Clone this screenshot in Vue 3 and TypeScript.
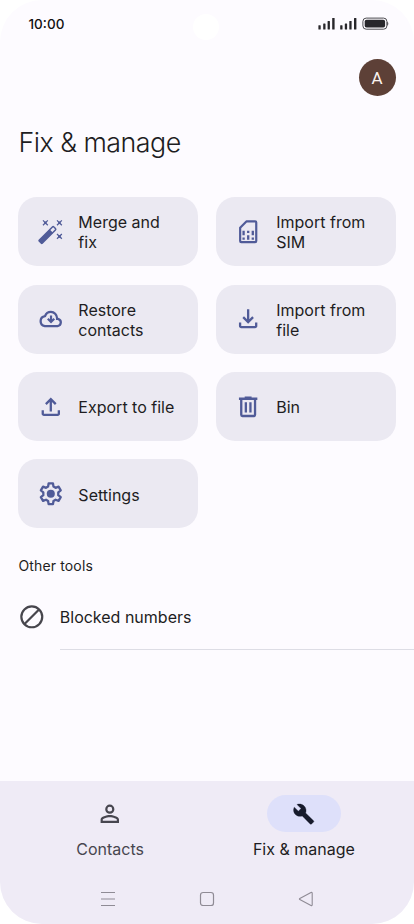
<script setup lang="ts">
interface Tool {
  id: string
  lines: string[]
}

const tools: Tool[] = [
  { id: 'merge', lines: ['Merge and', 'fix'] },
  { id: 'sim', lines: ['Import from', 'SIM'] },
  { id: 'restore', lines: ['Restore', 'contacts'] },
  { id: 'import', lines: ['Import from', 'file'] },
  { id: 'export', lines: ['Export to file'] },
  { id: 'bin', lines: ['Bin'] },
  { id: 'settings', lines: ['Settings'] },
]
</script>

<template>
  <div class="screen">
    <header class="status">
      <span class="time">10:00</span>
      <span class="camera"></span>
      <svg class="indicators" width="72" height="14" viewBox="0 0 72 14">
        <g fill="#28272b">
          <rect x="0.4" y="8.2" width="2.3" height="4.2" rx=".5" />
          <rect x="5.2" y="6.6" width="2.3" height="5.8" rx=".5" />
          <rect x="9.6" y="4" width="2.3" height="8.4" rx=".5" />
          <rect x="14.2" y="1" width="2.4" height="11.4" rx=".5" />
          <rect x="22.2" y="8.2" width="2.3" height="4.2" rx=".5" />
          <rect x="26.8" y="6.6" width="2.3" height="5.8" rx=".5" />
          <rect x="31.3" y="4" width="2.3" height="8.4" rx=".5" />
          <rect x="36" y="1" width="2.4" height="11.4" rx=".5" />
          <rect x="46.7" y="2.7" width="20.4" height="7.9" rx="1.8" />
          <path d="M69.3 4.7c1.3.3 1.3 3.6 0 3.9z" />
        </g>
        <rect x="44.9" y="1.1" width="24" height="11.1" rx="3.3" fill="none" stroke="#4c4b4f" stroke-width="1" />
      </svg>
    </header>

    <main class="content">
      <div class="account"><span class="avatar">A</span></div>
      <h1 class="title">Fix &amp; manage</h1>

      <div class="grid">
        <div v-for="tool in tools" :key="tool.id" class="card">
          <svg class="icon" viewBox="0 0 24 24">
            <g v-if="tool.id === 'merge'">
              <g transform="translate(9.2 14.6) rotate(-45)">
                <rect x="-9.6" y="-2.500" width="14.200" height="5" rx="1.100" fill="currentColor" />
                <rect x="3.500" y="-1.850" width="5.200" height="3.700" rx=".9" fill="none" stroke="currentColor" stroke-width="1.300" />
              </g>
              <path fill="none" stroke="currentColor" stroke-width="1.100" d="M5.200 2.100l4.200 4.200m0-4.200L5.200 6.300M17.400 2.100l4.200 4.200m0-4.200l-4.200 4.200M17.400 13.900l4.200 4.200m0-4.200l-4.200 4.200" />
              <path fill="currentColor" d="M7.300 2.900l1.300 1.300-1.300 1.300-1.300-1.300zM19.500 2.900l1.300 1.300-1.300 1.300-1.300-1.300zM19.500 14.700l1.300 1.300-1.300 1.300-1.300-1.300z" />
            </g>
            <g v-else-if="tool.id === 'sim'" transform="translate(.35 0)">
              <path fill="none" stroke="currentColor" stroke-width="1.900" stroke-linejoin="round" d="M10.400 3H18q1 0 1 1v16q0 1-1 1H6q-1 0-1-1V8.400z" />
              <path fill="currentColor" d="M7 11h2v4H7zM11 11h2v2h-2zM15 11h2v4h-2zM7 17h2v2H7zM11 15h2v4h-2zM15 17h2v2h-2z" />
            </g>
            <g v-else-if="tool.id === 'restore'" transform="translate(.2 0)">
              <path fill="none" stroke="currentColor" stroke-width="2" d="M6.600 18.300H17.700a3.200 3.200 0 0 0 .3-6.300h-.7v-.5c-.2-3-2.500-5.500-5.400-5.500-2.400 0-4.300 1.400-5.100 3.600A4.400 4.400 0 0 0 6.600 18.300z" />
              <path fill="none" stroke="currentColor" stroke-width="1.900" d="M12 9.200v5.400M9.200 12l2.800 2.800 2.800-2.800" />
            </g>
            <path v-else-if="tool.id === 'import'" fill="currentColor" d="M12 16 7 11l1.400-1.450 2.600 2.600V3.500h2v8.650l2.600-2.600L17 11zM6 20q-.82 0-1.410-.59Q4 18.820 4 18v-3h2v3h12v-3h2v3q0 .82-.59 1.410Q18.820 20 18 20z" transform="translate(.3 .2)" />
            <path v-else-if="tool.id === 'export'" fill="currentColor" d="M11 16V7.850l-2.600 2.600L7 9l5-5 5 5-1.400 1.450-2.600-2.600V16zM6 20q-.82 0-1.410-.59Q4 18.820 4 18v-3h2v3h12v-3h2v3q0 .82-.59 1.410Q18.820 20 18 20z" />
            <path v-else-if="tool.id === 'bin'" fill="currentColor" fill-rule="evenodd" d="M9 3h6v1h5v2h-1v13q0 2-2 2H7q-2 0-2-2V6H4V4h5zM7 6v13h10V6zM9 8h2v9H9zM13 8h2v9h-2z" transform="translate(.3 0)" />
            <g v-else>
              <path fill="none" stroke="currentColor" stroke-width="2" stroke-linejoin="round" d="M10.100 3h3.800l.45 2.750 1.800 1.050 2.600-1 1.900 3.250L18.500 10.800v2.400l2.150 1.750-1.900 3.250-2.600-1-1.800 1.050L13.900 21h-3.800l-.45-2.750-1.800-1.050-2.600 1-1.900-3.250L5.500 13.200v-2.400L3.350 9.050l1.900-3.250 2.600 1 1.800-1.050z" />
              <circle cx="12" cy="12" r="3.500" fill="currentColor" />
            </g>
          </svg>
          <span class="label"><span v-for="line in tool.lines" :key="line" class="line">{{ line }}</span></span>
        </div>
      </div>

      <h2 class="subtitle">Other tools</h2>
      <div class="row">
        <svg class="block-icon" viewBox="0 0 24 24" fill="none" stroke="currentColor" stroke-width="1.900">
          <circle cx="12" cy="12" r="9.100" />
          <path d="M18.300 5.700 5.700 18.300" />
        </svg>
        <div class="row-text">Blocked numbers</div>
      </div>
    </main>

    <footer class="bottom">
      <nav class="tabs">
        <div class="tab contacts">
          <span class="pill">
            <svg class="tab-icon" viewBox="0 0 24 24" fill="currentColor">
              <path fill-rule="evenodd" d="M12 4a4 4 0 1 1 0 8 4 4 0 0 1 0-8zm0 1.900a2.100 2.100 0 1 0 0 4.200 2.100 2.100 0 0 0 0-4.200zM12 13c2.670 0 8 1.340 8 4v3H4v-3c0-2.660 5.330-4 8-4zm0 1.900c-2.970 0-6.100 1.460-6.100 2.100v1.100h12.200V17c0-.64-3.130-2.100-6.100-2.100z" />
            </svg>
          </span>
          <span class="tab-label">Contacts</span>
        </div>
        <div class="tab manage">
          <span class="pill active">
            <svg class="tab-icon" viewBox="0 0 24 24" fill="currentColor">
              <path d="M20.900 18.500 14 11.700c.8-1.900.4-4.400-1.300-6.100-1.700-1.700-4.200-2.100-6.200-1.300l3.500 3.500-2.300 2.300-3.600-3.500C3 8.700 3.400 11.300 5.100 13c1.600 1.600 4 2 6 1.300l6.800 6.900q.7.600 1.300 0l1.700-1.700q.6-.5 0-1z" transform="translate(-.4 -.4)" stroke="currentColor" stroke-width=".3" />
            </svg>
          </span>
          <span class="tab-label">Fix &amp; manage</span>
        </div>
      </nav>
      <div class="system">
        <svg width="16" height="16" viewBox="0 0 16 16" stroke="#8f8b95" stroke-width="1.200"><path d="M1 1.500h14M1 8h14M1 14.500h14" /></svg>
        <svg width="16" height="16" viewBox="0 0 16 16" fill="none" stroke="#8f8b95" stroke-width="1.200"><rect x="1.500" y="1.500" width="13" height="13" rx="2.600" /></svg>
        <svg width="16" height="16" viewBox="0 0 16 16" fill="none" stroke="#8f8b95" stroke-width="1.100" stroke-linejoin="round"><path d="M1.800 7.400 13 1.500q1.200-.5 1.200.7v11.600q0 1.200-1.200.7L1.800 8.600q-.8-.6 0-1.200z" /></svg>
      </div>
    </footer>
  </div>
</template>

<style>
body {
  background: #fff;
}
</style>

<style scoped>
.screen {
  box-sizing: border-box;
  width: 414px;
  height: 924px;
  display: flex;
  flex-direction: column;
  overflow: hidden;
  border-radius: 42px;
  background: #fdfbff;
  color: #1e1d22;
  font-family: Inter, Roboto, sans-serif;
}
.status {
  height: 48px;
  padding: 0 24px 0 28.500px;
  box-sizing: border-box;
  display: grid;
  grid-template-columns: 164px 26px 1fr;
  align-items: center;
}
.time {
  font: 500 13.500px Inter, sans-serif;
  letter-spacing: 0;
  color: #111;
}
.camera {
  width: 26px;
  height: 26px;
  margin-top: 5px;
  border-radius: 50%;
  background: #fff;
}
.indicators {
  justify-self: end;
}
.content {
  flex: 1;
  padding-left: 18.400px;
}
.account {
  display: flex;
  justify-content: flex-end;
  padding: 11.300px 18.400px 0 0;
}
.avatar {
  width: 37px;
  height: 37px;
  border-radius: 50%;
  background: #5d4037;
  color: #fbf3ef;
  font: 400 17px/38px Roboto, sans-serif;
  text-align: center;
}
.title {
  margin: 27.700px 0 37.300px;
  font-size: 26.800px;
  line-height: 36px;
  font-weight: 350;
  letter-spacing: -.5px;
}
.grid {
  display: grid;
  grid-template-columns: 179.500px 179.500px;
  grid-auto-rows: 69px;
  gap: 18.400px;
}
.card {
  box-sizing: border-box;
  display: flex;
  align-items: center;
  gap: 14.200px;
  padding-left: 18.200px;
  border-radius: 19px;
  background: #ebe9f2;
}
.icon {
  width: 27.600px;
  height: 27.600px;
  flex: none;
  color: #505b98;
}
.label {
  font-size: 16px;
  line-height: 20px;
  padding-top: 1.100px;
  font-weight: 420;
}
.line {
  display: block;
  white-space: nowrap;
}
.subtitle {
  margin: 28px 0 0;
  font-size: 14px;
  line-height: 20px;
  font-weight: 400;
  letter-spacing: .15px;
}
.row {
  display: flex;
  align-items: center;
  gap: 13.800px;
  height: 74px;
}
.block-icon {
  width: 27.600px;
  height: 27.600px;
  margin-top: 6px;
  flex: none;
  color: #47464d;
}
.row-text {
  flex: 1;
  box-sizing: border-box;
  height: 74px;
  line-height: 83px;
  font-size: 16px;
  border-bottom: 1px solid #dddde5;
}
.bottom {
  height: 143px;
  flex: none;
  background: #efebf6;
}
.tabs {
  display: flex;
  justify-content: center;
  height: 101px;
  padding-top: 14px;
  box-sizing: border-box;
}
.tab {
  width: 193.700px;
  display: flex;
  flex-direction: column;
  align-items: center;
}
.pill {
  width: 73.500px;
  height: 37px;
  border-radius: 19px;
  display: flex;
  align-items: center;
  justify-content: center;
}
.active {
  background: #dee0fa;
  color: #171b2c;
}
.tab-icon {
  width: 27.600px;
  height: 27.600px;
}
.contacts {
  color: #47464f;
}
.tab-label {
  margin-top: 6.500px;
  font-size: 16px;
  line-height: 20px;
}
.system {
  display: flex;
  justify-content: center;
  gap: 82.700px;
  padding-top: 8.500px;
}
</style>
